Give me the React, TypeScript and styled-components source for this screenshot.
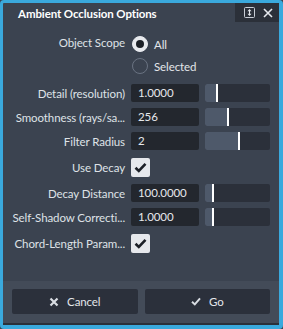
import React, {useState} from 'react';
import styled, {createGlobalStyle} from 'styled-components';

const GlobalStyle = createGlobalStyle`
	html, body {
		margin: 0;
		padding: 0;
		background: #3b4350;
	}
	body {
		font-family: Lato, 'Noto Sans', sans-serif;
		letter-spacing: -0.1px;
	}
`;

type SliderRow = {label: string; value: string; fill: number};

const topRows: SliderRow[] = [
	{label: 'Detail (resolution)', value: '1.0000', fill: 11},
	{label: 'Smoothness (rays/sa...', value: '256', fill: 22},
	{label: 'Filter Radius', value: '2', fill: 33}
];

const decayRows: SliderRow[] = [
	{label: 'Decay Distance', value: '100.0000', fill: 7},
	{label: 'Self-Shadow Correcti...', value: '1.0000', fill: 7}
];

export default function App() {
	const [scope, setScope] = useState('all');
	const [useDecay, setUseDecay] = useState(true);
	const [chord, setChord] = useState(true);

	const renderSliderRow = (row: SliderRow) => (
		<React.Fragment key={row.label}>
			<Label>{row.label}</Label>
			<ValueInput>{row.value}</ValueInput>
			<Slider>
				<SliderFill style={{width: row.fill}} />
			</Slider>
		</React.Fragment>
	);

	return (
		<>
			<GlobalStyle />
			<Window>
				<TitleBar>
					<Title>Ambient Occlusion Options</Title>
					<TitleButtons>
						<svg width="11" height="11" viewBox="0 0 11 11">
							<rect x="0.5" y="0.5" width="10" height="10" rx="1" fill="none" stroke="#c9ced6" strokeWidth="1" />
							<path d="M5.5 2 L3.5 4.3 H7.5 Z M5.5 9 L3.5 6.7 H7.5 Z" fill="#e6e9ee" />
							<rect x="5" y="4" width="1" height="3" fill="#e6e9ee" />
						</svg>
						<svg width="10" height="10" viewBox="0 0 10 10">
							<path d="M1 1 L9 9 M9 1 L1 9" stroke="#e6e9ee" strokeWidth="1.6" />
						</svg>
					</TitleButtons>
				</TitleBar>
				<Body>
					<Label $top>Object Scope</Label>
					<RadioGroup>
						<RadioOption onClick={() => setScope('all')}>
							<Radio $checked={scope === 'all'} />
							All
						</RadioOption>
						<RadioOption onClick={() => setScope('selected')}>
							<Radio $checked={scope === 'selected'} />
							Selected
						</RadioOption>
					</RadioGroup>
					{topRows.map(renderSliderRow)}
					<Label $tall>Use Decay</Label>
					<CheckCell>
						<Checkbox onClick={() => setUseDecay(!useDecay)}>
							{useDecay && <CheckMark />}
						</Checkbox>
					</CheckCell>
					{decayRows.map(renderSliderRow)}
					<Label $tall>Chord-Length Param...</Label>
					<CheckCell>
						<Checkbox onClick={() => setChord(!chord)}>
							{chord && <CheckMark />}
						</Checkbox>
					</CheckCell>
				</Body>
				<Footer>
					<Button>
						<svg width="10" height="10" viewBox="0 0 10 10">
							<path d="M1.5 1.5 L8.5 8.5 M8.5 1.5 L1.5 8.5" stroke="#d9dde3" strokeWidth="2.2" />
						</svg>
						Cancel
					</Button>
					<Button>
						<svg width="10" height="9" viewBox="0 0 10 9">
							<path d="M1 4.8 L3.8 7.4 L9 1.4" stroke="#d9dde3" strokeWidth="2" fill="none" />
						</svg>
						Go
					</Button>
				</Footer>
			</Window>
		</>
	);
}

function CheckMark() {
	return (
		<svg width="13" height="11" viewBox="0 0 13 11">
			<path d="M1.5 5.8 L4.8 9 L11.5 1.8" stroke="#1c2027" strokeWidth="2.6" fill="none" />
		</svg>
	);
}

const Window = styled.div`
	box-sizing: border-box;
	width: 283px;
	height: 329px;
	display: flex;
	flex-direction: column;
	border-style: solid;
	border-color: #3aa9dd;
	border-width: 3px 4px 4px 3px;
	border-radius: 4px;
	background: #3b4350;
	overflow: hidden;
`;

const TitleBar = styled.div`
	display: flex;
	height: 19px;
	align-items: stretch;
	justify-content: space-between;
`;

const Title = styled.div`
	padding-left: 15px;
	padding-top: 1px;
	display: flex;
	align-items: center;
	color: #ffffff;
	font-size: 11.5px;
	font-weight: bold;
`;

const TitleButtons = styled.div`
	width: 42px;
	display: flex;
	align-items: center;
	justify-content: center;
	gap: 8px;
	padding-left: 2px;
	background: #2b3039;
`;

const Body = styled.div`
	flex: 1;
	display: grid;
	grid-template-columns: 112px 68px 65px;
	column-gap: 6px;
	row-gap: 6px;
	padding: 12px 0 0 10px;
	align-content: start;
`;

const Label = styled.div<{$top?: boolean; $tall?: boolean}>`
	grid-column: 1;
	display: flex;
	justify-content: flex-end;
	align-items: center;
	color: #dfe2e7;
	font-size: 11.5px;
	white-space: nowrap;
	height: ${(p) => (p.$tall ? '22px' : '18px')};
	align-self: ${(p) => (p.$top ? 'start' : 'center')};
	margin-top: ${(p) => (p.$top ? '-1px' : '0')};
`;

const RadioGroup = styled.div`
	grid-column: 2 / span 2;
	display: flex;
	flex-direction: column;
	gap: 2px;
	height: 44px;
`;

const RadioOption = styled.div`
	display: flex;
	align-items: center;
	gap: 6px;
	height: 20px;
	color: #e3e6ea;
	font-size: 11.5px;
	cursor: pointer;
`;

const Radio = styled.span<{$checked: boolean}>`
	box-sizing: border-box;
	width: 16px;
	height: 16px;
	margin-left: 1px;
	border-radius: 50%;
	display: flex;
	align-items: center;
	justify-content: center;
	border: 1px solid ${(p) => (p.$checked ? '#e8eaee' : '#6a7382')};
	background: ${(p) => (p.$checked ? '#e8eaee' : 'transparent')};
	&::after {
		content: '';
		display: ${(p) => (p.$checked ? 'block' : 'none')};
		width: 8px;
		height: 8px;
		border-radius: 50%;
		background: #1c2027;
	}
`;

const ValueInput = styled.div`
	box-sizing: border-box;
	height: 18px;
	padding-left: 7px;
	border-radius: 2px;
	background: #23272e;
	color: #e6e8ec;
	font-size: 11.5px;
	line-height: 18px;
`;

const Slider = styled.div`
	height: 18px;
	border-radius: 2px;
	background: #2b303a;
	display: flex;
	overflow: hidden;
`;

const SliderFill = styled.div`
	height: 100%;
	background: #4e596a;
	border-right: 2px solid #ffffff;
`;

const CheckCell = styled.div`
	grid-column: 2 / span 2;
	height: 22px;
	display: flex;
	align-items: center;
`;

const Checkbox = styled.div`
	width: 19px;
	height: 19px;
	border-radius: 2px;
	background: #e6e8ec;
	display: flex;
	align-items: center;
	justify-content: center;
	cursor: pointer;
`;

const Footer = styled.div`
	display: flex;
	gap: 7px;
	padding: 8px 9px 9px 9px;
	background: #434b58;
	border-bottom: 2px solid #2b3039;
`;

const Button = styled.button`
	flex: 1;
	height: 25px;
	display: flex;
	align-items: center;
	justify-content: center;
	gap: 8px;
	border: none;
	border-radius: 2px;
	background: #2b303b;
	color: #e3e6ea;
	font-family: Lato, 'Noto Sans', sans-serif;
	font-size: 11.5px;
	letter-spacing: -0.1px;
	cursor: pointer;
`;
